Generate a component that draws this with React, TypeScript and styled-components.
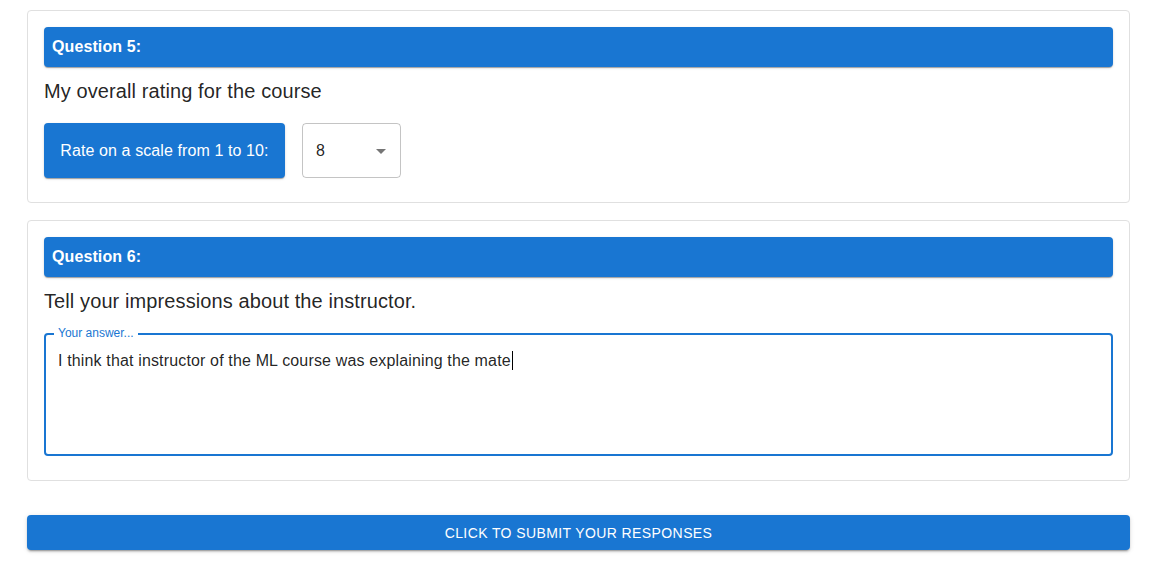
import React from "react";
import styled, { createGlobalStyle } from "styled-components";

const GlobalStyle = createGlobalStyle`
  html, body {
    margin: 0;
    padding: 0;
    background: #ffffff;
    font-family: "Liberation Sans", Arial, Helvetica, sans-serif;
    color: rgba(0, 0, 0, 0.87);
  }
  * { box-sizing: border-box; }
`;

const Page = styled.div`
  display: flex;
  flex-direction: column;
  padding: 10px 23px 18px 27px;
`;

const Card = styled.section`
  display: flex;
  flex-direction: column;
  border: 1px solid #e0e0e0;
  border-radius: 4px;
  background: #fff;
  padding: 16px 16px 24px;
  & + & {
    margin-top: 17px;
  }
`;

const QuestionHeader = styled.div`
  height: 40px;
  display: flex;
  align-items: center;
  padding: 0 8px;
  background: #1976d2;
  color: #fff;
  font-weight: 700;
  font-size: 16px;
  letter-spacing: 0.1px;
  border-radius: 4px;
  box-shadow: 0 2px 1px -1px rgba(0, 0, 0, 0.2), 0 1px 1px 0 rgba(0, 0, 0, 0.14),
    0 1px 3px 0 rgba(0, 0, 0, 0.12);
`;

const QuestionText = styled.div`
  font-size: 20px;
  line-height: 32px;
  letter-spacing: 0.1px;
  margin: 8px 0 16px;
  color: rgba(0, 0, 0, 0.87);
`;

const RateRow = styled.div`
  display: flex;
  align-items: stretch;
  gap: 17px;
  height: 55px;
`;

const RateLabel = styled.div`
  display: flex;
  align-items: center;
  justify-content: center;
  width: 241px;
  background: #1976d2;
  color: #fff;
  font-size: 16px;
  letter-spacing: 0.1px;
  border-radius: 4px;
  box-shadow: 0 2px 1px -1px rgba(0, 0, 0, 0.2), 0 1px 1px 0 rgba(0, 0, 0, 0.14),
    0 1px 3px 0 rgba(0, 0, 0, 0.12);
`;

const SelectBox = styled.div`
  position: relative;
  display: flex;
  align-items: center;
  width: 99px;
  padding-left: 13px;
  border: 1px solid rgba(0, 0, 0, 0.23);
  border-radius: 4px;
  font-size: 16px;
  color: rgba(0, 0, 0, 0.87);
`;

const SelectArrow = styled.svg`
  position: absolute;
  right: 7px;
  top: 50%;
  margin-top: -12px;
  width: 24px;
  height: 24px;
  fill: rgba(0, 0, 0, 0.54);
`;

const AnswerField = styled.div`
  position: relative;
  height: 123px;
  border: 2px solid #1976d2;
  border-radius: 4px;
  padding: 13.5px 12px;
  font-size: 16px;
  line-height: 23px;
  letter-spacing: 0.15px;
  color: rgba(0, 0, 0, 0.87);
`;

const FloatingLabel = styled.span`
  position: absolute;
  top: -9px;
  left: 8px;
  padding: 0 4px;
  background: #fff;
  font-size: 12px;
  line-height: 14px;
  letter-spacing: 0;
  color: #1976d2;
`;

const Caret = styled.span`
  display: inline-block;
  width: 1px;
  height: 19px;
  margin-left: 1px;
  vertical-align: -4px;
  background: #000;
`;

const SubmitButton = styled.button`
  margin-top: 34px;
  height: 35px;
  width: 100%;
  border: none;
  border-radius: 4px;
  background: #1976d2;
  color: #fff;
  font-family: "Liberation Sans", Arial, Helvetica, sans-serif;
  font-size: 14px;
  letter-spacing: 0.4px;
  text-transform: uppercase;
  cursor: pointer;
  box-shadow: 0 3px 1px -2px rgba(0, 0, 0, 0.2), 0 2px 2px 0 rgba(0, 0, 0, 0.14),
    0 1px 5px 0 rgba(0, 0, 0, 0.12);
`;

export default function App() {
  return (
    <>
      <GlobalStyle />
      <Page>
        <Card>
          <QuestionHeader>Question 5:</QuestionHeader>
          <QuestionText>My overall rating for the course</QuestionText>
          <RateRow>
            <RateLabel>Rate on a scale from 1 to 10:</RateLabel>
            <SelectBox>
              8
              <SelectArrow viewBox="0 0 24 24">
                <path d="M7 10l5 5 5-5z" />
              </SelectArrow>
            </SelectBox>
          </RateRow>
        </Card>
        <Card>
          <QuestionHeader>Question 6:</QuestionHeader>
          <QuestionText>Tell your impressions about the instructor.</QuestionText>
          <AnswerField>
            <FloatingLabel>Your answer...</FloatingLabel>
            I think that instructor of the ML course was explaining the mate
            <Caret />
          </AnswerField>
        </Card>
        <SubmitButton>Click to submit your responses</SubmitButton>
      </Page>
    </>
  );
}
